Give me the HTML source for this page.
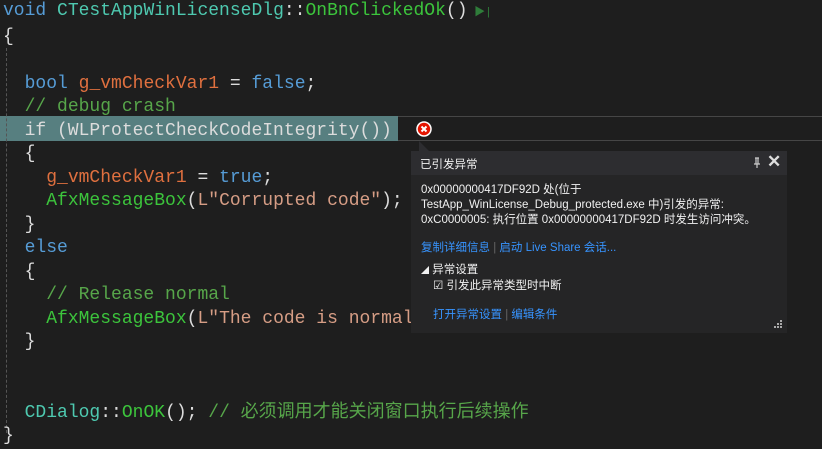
<!DOCTYPE html>
<html><head><meta charset="utf-8"><style>
body{margin:0;width:822px;height:445px;background:#1e1e1e;overflow:hidden;position:relative;font-family:"Liberation Mono","Noto Sans CJK SC",monospace;}
.code{position:absolute;left:3px;top:0;font-size:18px;line-height:23.5px;color:#dcdcdc;white-space:pre;}
.k{color:#569cd6}.c{color:#4ec9b0}.f{color:#3cc43c}.v{color:#e0703f}.cm{color:#57a64a}.s{color:#d69d85}
.hl{position:absolute;left:0;top:116px;width:398px;height:25px;background:#577f80;}
.hlr{position:absolute;left:398px;top:116px;right:0;height:23px;border-top:1px solid #464646;border-bottom:1px solid #464646;}
.guide{position:absolute;left:6px;top:48px;height:385px;border-left:1px dashed #555;}
.pop{position:absolute;left:411px;top:151px;width:376px;height:182px;background:#252526;font-family:"Liberation Sans","Noto Sans CJK SC",sans-serif;font-size:11.5px;color:#f1f1f1;}
.hd{height:24px;background:#2d2d30;position:relative;}
.pop div.t{position:absolute;white-space:nowrap;}
.a{color:#3794ff}
</style></head><body>
<div class="hl"></div><div class="hlr"></div>
<div class="guide"></div>
<div class="code"><span class="k">void</span> <span class="c">CTestAppWinLicenseDlg</span>::<span class="f">OnBnClickedOk</span>()<span style="color:#2f7d3a;font-size:11px"> ▶|</span>
{

  <span class="k">bool</span> <span class="v">g_vmCheckVar1</span> = <span class="k">false</span>;
  <span class="cm">// debug crash</span>
  if (WLProtectCheckCodeIntegrity())
  {
    <span class="v">g_vmCheckVar1</span> = <span class="k">true</span>;
    <span class="f">AfxMessageBox</span>(<span class="s">L"Corrupted code"</span>);
  }
  <span class="k">else</span>
  {
    <span class="cm">// Release normal</span>
    <span class="f">AfxMessageBox</span>(<span class="s">L"The code is normal</span>
  }


  <span class="c">CDialog</span>::<span class="f">OnOK</span>(); <span class="cm">// 必须调用才能关闭窗口执行后续操作</span>
}</div>
<svg style="position:absolute;left:416px;top:121px" width="16" height="16"><circle cx="8" cy="8" r="7" fill="#e51400" stroke="#fff" stroke-width="1.5"/><path d="M5.5 5.5L10.5 10.5M10.5 5.5L5.5 10.5" stroke="#fff" stroke-width="2"/></svg>
<svg style="position:absolute;left:416px;top:141px" width="14" height="11"><path d="M3 0L13 10H3Z" fill="#2d2d30"/></svg>
<div class="pop">
 <div class="hd"><div class="t" style="left:9px;top:5px">已引发异常</div>
  <svg style="position:absolute;left:342px;top:6px" width="8" height="12"><path d="M2 1H6M3 1V7M5 1V7M1 7H7M4 7V11" stroke="#ccc" stroke-width="1.2" fill="none"/></svg>
  <div class="t" style="left:356px;top:1px;font-size:17px;font-weight:bold;color:#ddd">✕</div></div>
 <div class="t" style="left:10px;top:32px;line-height:15px">0x00000000417DF92D 处(位于<br>TestApp_WinLicense_Debug_protected.exe 中)引发的异常:<br>0xC0000005: 执行位置 0x00000000417DF92D 时发生访问冲突。</div>
 <div class="t" style="left:10px;top:88px"><span class="a">复制详细信息</span> <span style="color:#666">|</span> <span class="a">启动 Live Share 会话...</span></div>
 <div class="t" style="left:10px;top:110px"><span style="font-size:8px">◢</span> 异常设置</div>
 <div class="t" style="left:22px;top:126px">☑ 引发此异常类型时中断</div>
 <div class="t" style="left:22px;top:155px"><span class="a">打开异常设置</span> <span style="color:#666">|</span> <span class="a">编辑条件</span></div>
 <svg style="position:absolute;left:362px;top:168px" width="10" height="10" fill="#aaa"><rect x="7" y="1" width="2" height="2"/><rect x="4" y="4" width="2" height="2"/><rect x="7" y="4" width="2" height="2"/><rect x="1" y="7" width="2" height="2"/><rect x="4" y="7" width="2" height="2"/><rect x="7" y="7" width="2" height="2"/></svg>
</div>
</body></html>
